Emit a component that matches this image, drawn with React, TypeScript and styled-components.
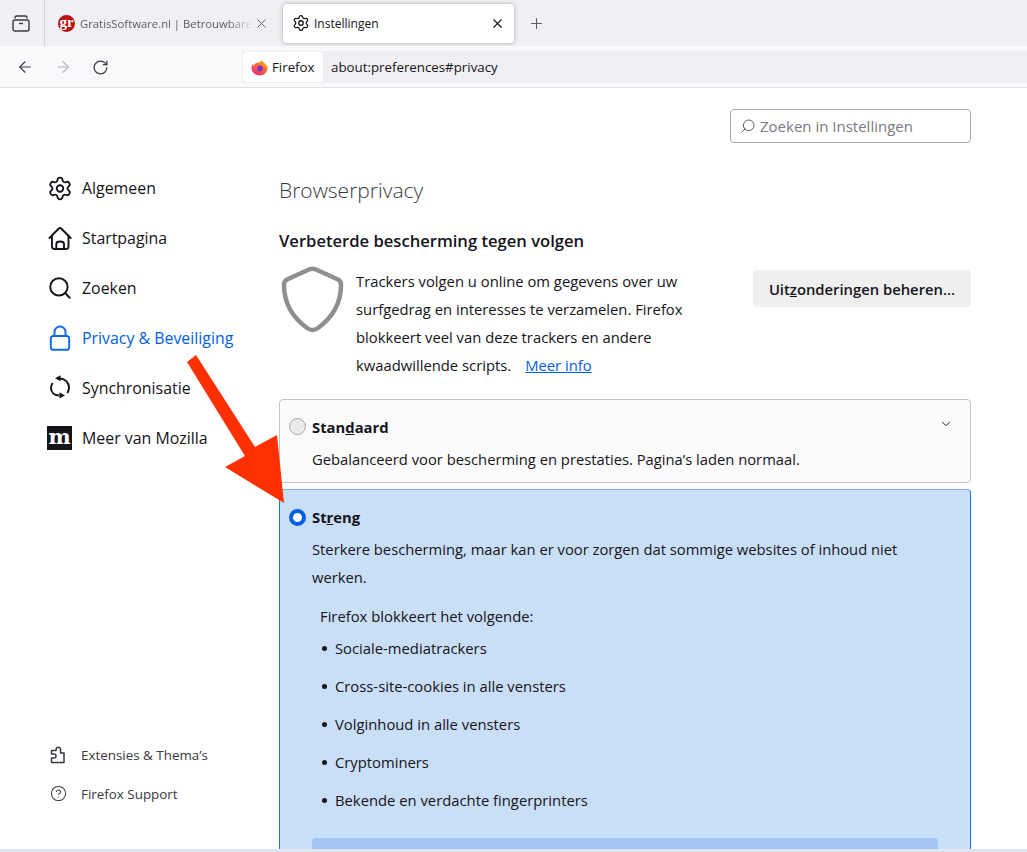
import React from "react";
import styled, { createGlobalStyle } from "styled-components";
import { Settings, Search, X, Plus, ArrowLeft, ArrowRight, RotateCw, ChevronDown, CircleHelp } from "lucide-react";

const Global = createGlobalStyle`
  html, body { margin: 0; padding: 0; background: #fff; }
  body { font-family: "Open Sans", "Noto Sans", sans-serif; color: #15141a; }
  * { box-sizing: border-box; }
`;

const Root = styled.div`
  position: relative;
  width: 1027px;
  height: 852px;
  overflow: hidden;
  display: flex;
  flex-direction: column;
  background: #fff;
`;

const TabStrip = styled.div`
  height: 46px;
  flex: none;
  display: flex;
  align-items: center;
  background: #f0f0f4;
`;

const ViewButton = styled.div`
  width: 45px;
  height: 46px;
  flex: none;
  display: flex;
  align-items: center;
  justify-content: center;
  padding-right: 3px;
  border-right: 1px solid #d4d4d8;
  margin-right: 13px;
`;

const Tab = styled.div<{ $active?: boolean }>`
  display: flex;
  align-items: center;
  height: 39px;
  flex: none;
  border-radius: 4px;
  ${(p) =>
    p.$active
      ? `width: 231px; padding: 0 9px 0 9px; font-size: 12px; background: #fff; box-shadow: 0 0 4px rgba(0,0,0,.3); margin-left: 14px;`
      : `width: 211px; font-size: 11.3px; color: #5b5b66;`}
`;

const TabTitle = styled.span<{ $fade?: boolean }>`
  flex: 1;
  min-width: 0;
  margin-left: ${(p) => (p.$fade ? "5px" : "4px")};
  white-space: nowrap;
  overflow: hidden;
  ${(p) =>
    p.$fade &&
    `-webkit-mask-image: linear-gradient(to right, #000 85%, transparent); mask-image: linear-gradient(to right, #000 85%, transparent);`}
`;

const Favicon = styled.div`
  width: 17px;
  height: 17px;
  flex: none;
  border-radius: 50%;
  background: #b8120f;
  color: #fff;
  font-family: "Liberation Serif", serif;
  font-weight: 700;
  font-size: 15px;
  line-height: 14px;
  text-align: center;
`;

const NewTab = styled.div`
  width: 45px;
  flex: none;
  display: flex;
  justify-content: center;
  color: #5b5b66;
`;

const NavBar = styled.div`
  height: 42px;
  flex: none;
  display: flex;
  align-items: center;
  padding: 1px 0 0 16px;
  background: #f9f9fb;
  border-bottom: 1px solid #e1e1e4;
`;

const NavIcons = styled.div`
  width: 226px;
  flex: none;
  display: flex;
  align-items: center;
  gap: 20px;
`;

const UrlBar = styled.div`
  flex: 1;
  height: 32px;
  display: flex;
  align-items: center;
  background: #f0f0f4;
  font-size: 13.3px;
`;

const Identity = styled.div`
  height: 30px;
  width: 80px;
  margin-left: 1px;
  flex: none;
  display: flex;
  align-items: center;
  gap: 4px;
  padding-left: 8px;
  background: #fff;
  border-radius: 4px;
  font-size: 13.3px;
`;

const UrlText = styled.span`
  margin-left: 8px;
`;

const Main = styled.div`
  flex: 1;
  min-height: 0;
  display: flex;
`;

const Sidebar = styled.nav`
  width: 279px;
  flex: none;
  padding: 75px 0 36px 47px;
  display: flex;
  flex-direction: column;
`;

const NavItem = styled.div<{ $active?: boolean }>`
  height: 50px;
  flex: none;
  display: flex;
  align-items: center;
  gap: 9px;
  font-size: 15.9px;
  white-space: nowrap;
  color: ${(p) => (p.$active ? "#0060df" : "#15141a")};
`;

const IconSlot = styled.div`
  width: 26px;
  height: 26px;
  flex: none;
  display: flex;
  align-items: center;
  justify-content: center;
`;

const Spacer = styled.div`
  flex: 1;
`;

const FootItem = styled.div`
  height: 39px;
  flex: none;
  display: flex;
  align-items: center;
  gap: 10px;
  margin-left: -2px;
  font-size: 13.4px;
  color: #3a3944;
  white-space: nowrap;
`;

const Content = styled.main`
  flex: 1;
  min-width: 0;
  padding: 21px 56px 0 0;
`;

const SearchBox = styled.div`
  width: 241px;
  height: 34px;
  margin-left: auto;
  display: flex;
  align-items: center;
  gap: 4px;
  padding-left: 9px;
  border: 1px solid #a9a9ad;
  border-radius: 4px;
  font-size: 15px;
  color: #7a7a82;
`;

const MirrorIcon = styled.span`
  display: flex;
  transform: scaleX(-1);
`;

const H1 = styled.h1`
  margin: 32px 0 0;
  font-size: 21px;
  font-weight: 300;
  line-height: 30px;
  color: #3a3944;
`;

const H2 = styled.h2`
  margin: 25px 0 0;
  font-size: 16.6px;
  font-weight: 600;
  line-height: 22px;
`;

const Intro = styled.div`
  margin-top: 15px;
  display: flex;
  align-items: flex-start;
`;

const Shield = styled.svg`
  width: 66px;
  height: 68px;
  flex: none;
  margin: -2px 11px 0 0;
`;

const IntroText = styled.p`
  width: 339px;
  flex: none;
  margin: 0;
  font-size: 14.8px;
  line-height: 28px;
`;

const InfoLink = styled.a`
  margin-left: 14px;
  color: #0060df;
  text-decoration: underline;
`;

const ManageButton = styled.div`
  margin: 3px 0 0 auto;
  width: 218px;
  height: 37px;
  display: flex;
  align-items: center;
  justify-content: center;
  background: #efeff0;
  border-radius: 4px;
  font-size: 14.8px;
  font-weight: 600;
`;

const Key = styled.span`
  text-decoration: underline;
  text-decoration-thickness: 1px;
`;

const Card = styled.section<{ $selected?: boolean }>`
  position: relative;
  padding: 14px 32px 0;
  border: 1px solid ${(p) => (p.$selected ? "#1f74e0" : "#c4c4c6")};
  ${(p) => p.$selected && "border-top-color: #7fb2ee;"}
  border-radius: 4px;
  background: ${(p) => (p.$selected ? "#c9def7" : "#fbfbfb")};
  ${(p) => (p.$selected ? "margin-top: 6px; height: 400px;" : "margin-top: 20px; height: 84px;")}
`;

const CardHead = styled.div`
  display: flex;
  align-items: center;
  height: 26px;
  font-size: 14.8px;
  font-weight: 700;
`;

const Radio = styled.span<{ $on?: boolean }>`
  position: absolute;
  left: 9px;
  width: 17px;
  height: 17px;
  border-radius: 50%;
  ${(p) =>
    p.$on
      ? "top: 19px; background: #fff; border: 4px solid #0060df;"
      : "top: 18px; background: #eaeaea; border: 1px solid #a9a9ad;"}
`;

const Chevron = styled.div`
  position: absolute;
  right: 17px;
  top: 17px;
  display: flex;
`;

const CardText = styled.p`
  margin: 5px 0 0;
  font-size: 14.75px;
  line-height: 28px;
`;

const ListIntro = styled.p`
  margin: 11px 0 0 8px;
  font-size: 14.8px;
  line-height: 28px;
`;

const Blocked = styled.ul`
  list-style: none;
  margin: -1px 0 0 8px;
  padding: 0;
`;

const BlockedItem = styled.li`
  display: flex;
  align-items: center;
  gap: 8px;
  height: 38px;
  padding-left: 2px;
  font-size: 14.8px;
  &::before {
    content: "";
    width: 5px;
    height: 5px;
    border-radius: 50%;
    background: #15141a;
  }
`;

const Notice = styled.div`
  height: 40px;
  margin-top: 19px;
  border-radius: 4px;
  background: #a3c5f3;
`;

const BottomEdge = styled.div`
  height: 3px;
  flex: none;
  background: #dfe6ef;
  position: relative;
`;

const Arrow = styled.svg`
  position: absolute;
  left: 180px;
  top: 350px;
  width: 110px;
  height: 160px;
  pointer-events: none;
`;

const MozillaBox = styled.div`
  width: 25px;
  height: 24px;
  margin-left: -1px;
  background: #15141a;
  color: #fff;
  font-family: "DejaVu Serif", serif;
  font-weight: 700;
  font-size: 21px;
  line-height: 21px;
  text-align: center;
`;

const Firefox = () => (
  <svg width="17" height="17" viewBox="0 0 18 18">
    <defs>
      <linearGradient id="ff" x1="0.8" y1="0" x2="0.2" y2="1">
        <stop offset="0" stopColor="#ffc31f" />
        <stop offset="0.45" stopColor="#ff6a2b" />
        <stop offset="1" stopColor="#e6238a" />
      </linearGradient>
    </defs>
    <path d="M11.500 .5c.3 1.500 1.400 2.500 2.600 3.700C15.900 5.700 17.500 7.200 17.500 9.600 17.500 14 13.400 17.500 9 17.500S.5 13.800.5 9.500c0-1.800.5-3.200 1.300-4.300.2 1 .6 1.500 1.200 1.900.3-1.500 1.500-2.400 3-2.900C8.500 3.500 10.800 3 11.500.5z" fill="url(#ff)" />
    <circle cx="9.500" cy="10" r="3" fill="#7a32c8" />
  </svg>
);

const HomeIcon = () => (
  <svg width="26" height="26" viewBox="0 0 24 26" fill="none" stroke="#15141a" strokeWidth="1.9" strokeLinecap="round" strokeLinejoin="round">
    <path d="M1.500 13 L10.800 3.500 Q12 2.300 13.200 3.500 L22.700 13" />
    <path d="M4 11 V21.500 Q4 24 6.500 24 H18 Q20.500 24 20.500 21.500 V11" />
    <path d="M8.300 24 V19 Q8.300 16.500 12.200 16.500 Q16 16.500 16 19 V24" />
  </svg>
);

const LockIcon = () => (
  <svg width="26" height="26" viewBox="0 0 26 26" fill="none" stroke="#0a6be6" strokeWidth="1.9">
    <rect x="3.800" y="11" width="18.400" height="13.800" rx="2.600" />
    <path d="M7.500 11 V7 a5.500 5.500 0 0 1 11 0 V11" />
  </svg>
);

const SyncIcon = () => (
  <svg width="26" height="26" viewBox="0 0 26 26" fill="none" stroke="#15141a" strokeWidth="2">
    <path d="M12.500 3.500 C18 3.500 22 7.500 22 12.500 C22 14.500 21.300 16.500 20.300 18" />
    <path d="M5.700 8 C4.600 9.500 4 11.200 4 13 C4 17.500 7.500 20.500 12.500 20.500" />
    <path d="M8 3.200 L13.500 .2 V6.200 Z" fill="#15141a" stroke="none" />
    <path d="M18 20.400 L12.500 17.200 V23.500 Z" fill="#15141a" stroke="none" />
  </svg>
);

const PuzzleIcon = () => (
  <svg width="26" height="26" viewBox="0 0 26 26" fill="none" stroke="#3a3944" strokeWidth="1.5" strokeLinejoin="round">
    <path d="M6.500 20.500 H19 V11 H15.500 V7.500 a2.200 2.200 0 0 0 -4.400 0 V8.500 H6.500 V12 H9 a2 2 0 0 1 0 4 H6.500 Z" />
  </svg>
);

export default function App() {
  return (
    <Root>
      <Global />
      <TabStrip>
        <ViewButton>
          <svg width="18" height="17" viewBox="0 0 18 17" fill="none" stroke="#3a3944" strokeWidth="1.4">
            <path d="M3 3.500 V2.500 Q3 1 4.500 1 H13.500 Q15 1 15 2.500 V3.500" />
            <rect x="1" y="5" width="16" height="11" rx="2" />
            <path d="M7 8.500h4" />
          </svg>
        </ViewButton>
        <Tab>
          <Favicon>gr</Favicon>
          <TabTitle $fade>GratisSoftware.nl | Betrouwbare</TabTitle>
          <X size={15} strokeWidth={1.4} color="#5b5b66" />
        </Tab>
        <Tab $active>
          <Settings size={18} strokeWidth={1.7} />
          <TabTitle>Instellingen</TabTitle>
          <X size={15} strokeWidth={1.8} />
        </Tab>
        <NewTab>
          <Plus size={17} strokeWidth={1.5} />
        </NewTab>
      </TabStrip>
      <NavBar>
        <NavIcons>
          <ArrowLeft size={18} strokeWidth={1.5} color="#3a3944" />
          <ArrowRight size={18} strokeWidth={1.5} color="#b8b8bd" />
          <RotateCw size={17} strokeWidth={1.7} color="#3a3944" />
        </NavIcons>
        <UrlBar>
          <Identity>
            <Firefox />
            Firefox
          </Identity>
          <UrlText>about:preferences#privacy</UrlText>
        </UrlBar>
      </NavBar>
      <Main>
        <Sidebar>
          <NavItem>
            <IconSlot><Settings size={27} strokeWidth={1.7} /></IconSlot>
            Algemeen
          </NavItem>
          <NavItem>
            <IconSlot><HomeIcon /></IconSlot>
            Startpagina
          </NavItem>
          <NavItem>
            <IconSlot><Search size={26} strokeWidth={1.8} /></IconSlot>
            Zoeken
          </NavItem>
          <NavItem $active>
            <IconSlot><LockIcon /></IconSlot>
            Privacy &amp; Beveiliging
          </NavItem>
          <NavItem>
            <IconSlot><SyncIcon /></IconSlot>
            Synchronisatie
          </NavItem>
          <NavItem>
            <IconSlot><MozillaBox>m</MozillaBox></IconSlot>
            Meer van Mozilla
          </NavItem>
          <Spacer />
          <FootItem>
            <IconSlot><PuzzleIcon /></IconSlot>
            Extensies &amp; Thema’s
          </FootItem>
          <FootItem>
            <IconSlot><CircleHelp size={17} strokeWidth={1.5} color="#3a3944" /></IconSlot>
            Firefox Support
          </FootItem>
        </Sidebar>
        <Content>
          <SearchBox>
            <MirrorIcon><Search size={16} strokeWidth={1.5} color="#5b5b66" /></MirrorIcon>
            Zoeken in Instellingen
          </SearchBox>
          <H1>Browserprivacy</H1>
          <H2>Verbeterde bescherming tegen volgen</H2>
          <Intro>
            <Shield viewBox="0 0 66 68" fill="none">
              <path d="M30 4.500 Q33.500 3 37 4.500 L59 14.500 Q62 16 62 20 C62 38 54 52 39 63 Q33.500 67 28 63 C13 52 5 38 5 20 Q5 16 8 14.500 Z" stroke="#8f8f8f" strokeWidth="4.500" strokeLinejoin="round" />
            </Shield>
            <IntroText>
              Trackers volgen u online om gegevens over uw surfgedrag en interesses te verzamelen. Firefox blokkeert veel van deze trackers en andere kwaadwillende scripts.
              <InfoLink>Meer info</InfoLink>
            </IntroText>
            <ManageButton>
              <span>Uit<Key>z</Key>onderingen beheren...</span>
            </ManageButton>
          </Intro>
          <Card>
            <Radio />
            <CardHead><span>Stan<Key>d</Key>aard</span></CardHead>
            <Chevron><ChevronDown size={14} strokeWidth={1.6} /></Chevron>
            <CardText>Gebalanceerd voor bescherming en prestaties. Pagina’s laden normaal.</CardText>
          </Card>
          <Card $selected>
            <Radio $on />
            <CardHead><span>St<Key>r</Key>eng</span></CardHead>
            <CardText>Sterkere bescherming, maar kan er voor zorgen dat sommige websites of inhoud niet werken.</CardText>
            <ListIntro>Firefox blokkeert het volgende:</ListIntro>
            <Blocked>
              <BlockedItem>Sociale-mediatrackers</BlockedItem>
              <BlockedItem>Cross-site-cookies in alle vensters</BlockedItem>
              <BlockedItem>Volginhoud in alle vensters</BlockedItem>
              <BlockedItem>Cryptominers</BlockedItem>
              <BlockedItem>Bekende en verdachte fingerprinters</BlockedItem>
            </Blocked>
            <Notice />
          </Card>
        </Content>
      </Main>
      <BottomEdge />
      <Arrow viewBox="0 0 110 160">
        <polygon points="7,12 16,5 75,97 97,85 104,153 45,117 65,106" fill="#ff3000" />
      </Arrow>
    </Root>
  );
}
